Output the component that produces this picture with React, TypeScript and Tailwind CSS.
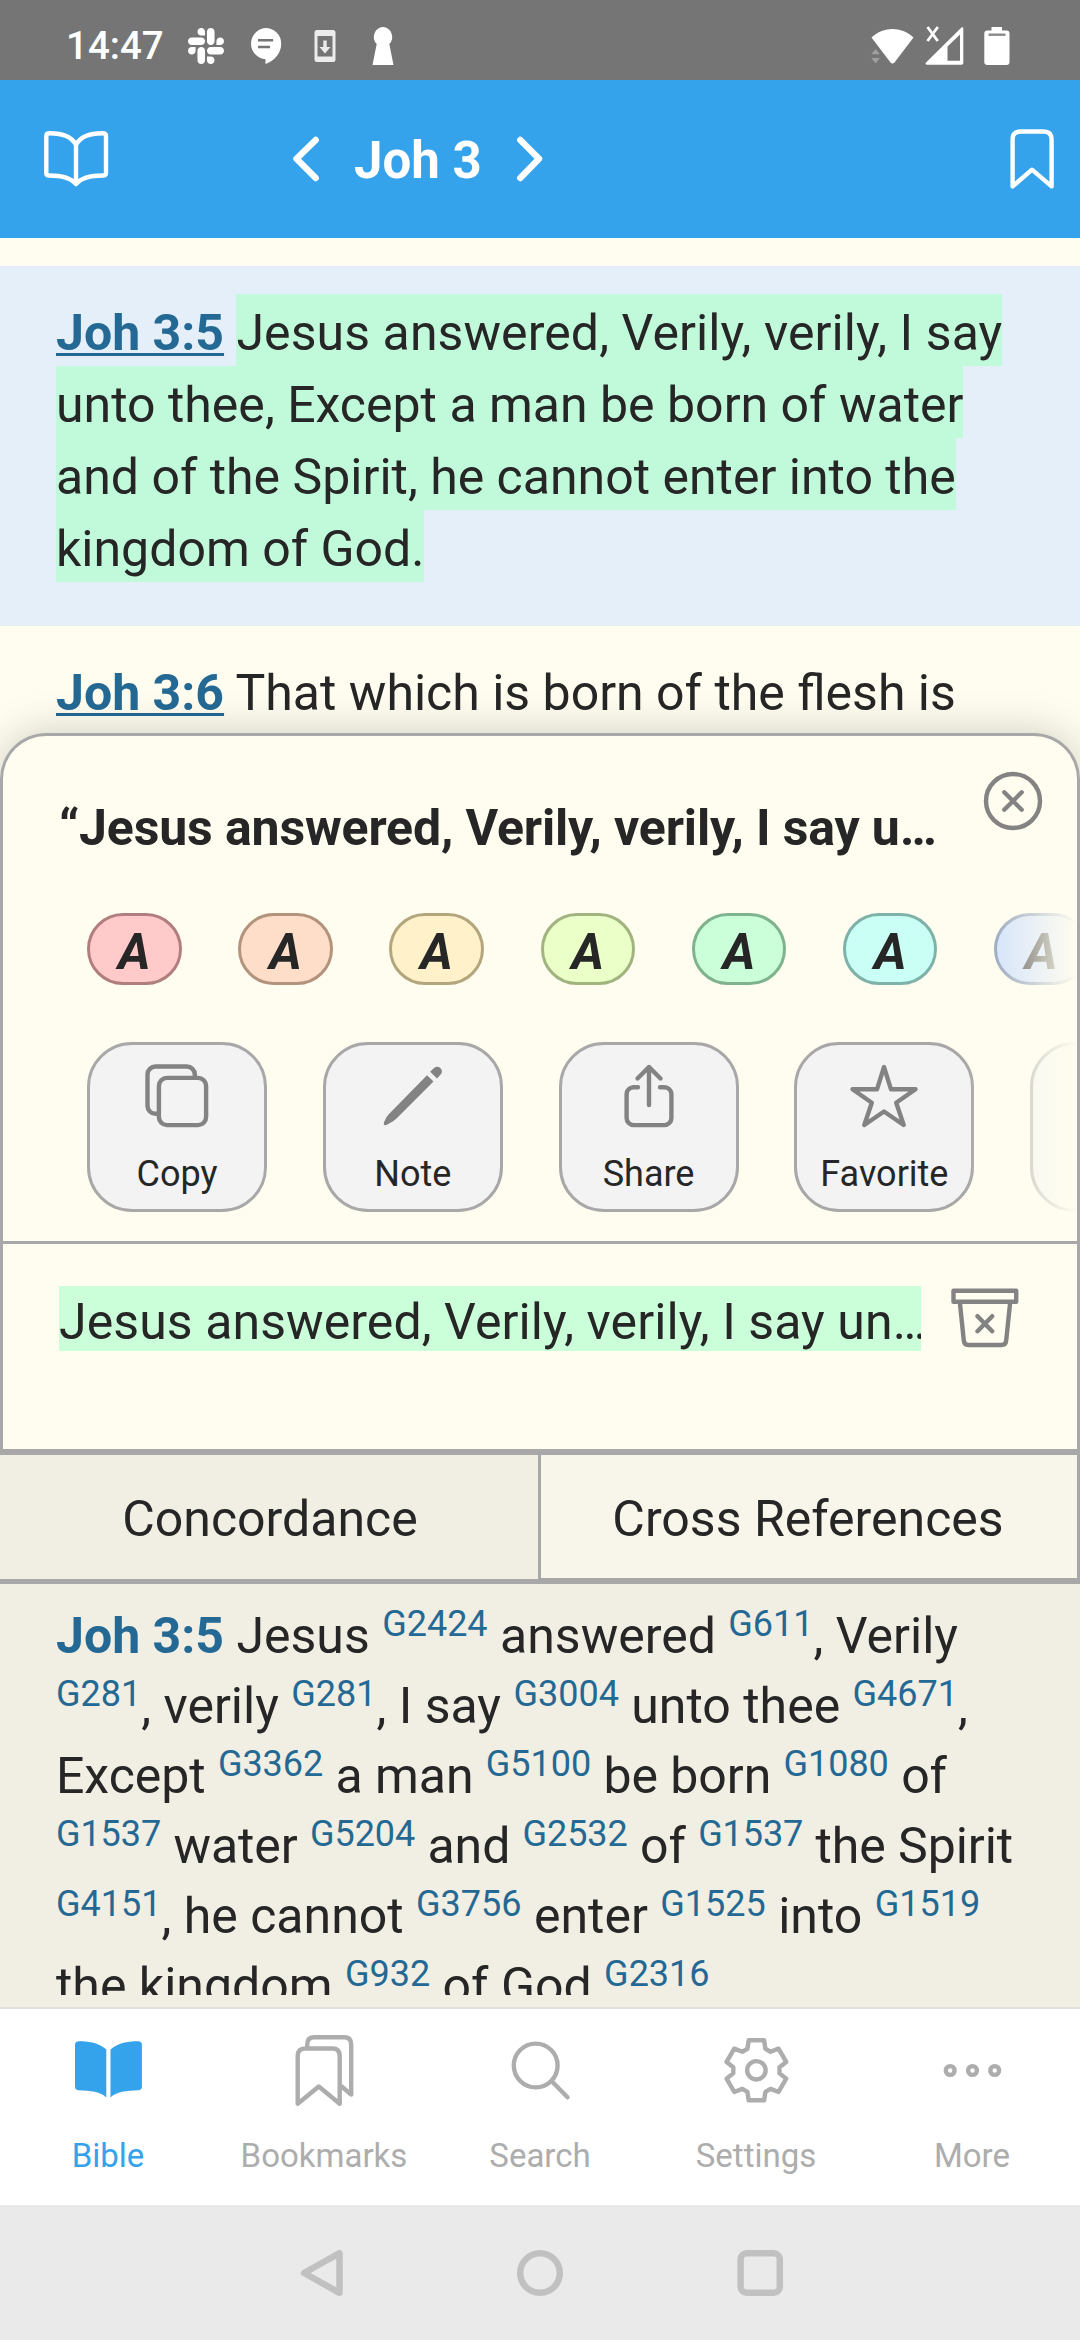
import React from "react";
import { FaSlack } from "react-icons/fa";

const pills = [
  "bg-[#ffcac9] border-[#b07e7e]",
  "bg-[#ffdec9] border-[#b3937c]",
  "bg-[#fff1c9] border-[#b3a67d]",
  "bg-[#ebffc9] border-[#a1b37e]",
  "bg-[#caffd9] border-[#7eb38e]",
  "bg-[#c9fff4] border-[#7eb2a9]",
  "bg-[#c9dcff] border-[#7e92b3]",
];

function Line({ children, className = "", h = 72 }: { children?: React.ReactNode; className?: string; h?: number }) {
  return (
    <svg
      width="72"
      height={h}
      viewBox={`0 0 72 ${h}`}
      fill="none"
      stroke="currentColor"
      strokeWidth="4.4"
      strokeLinecap="round"
      strokeLinejoin="round"
      className={`shrink-0 ${className}`}
    >
      {children}
    </svg>
  );
}

function StatusBar() {
  return (
    <div className="flex h-[80px] shrink-0 items-start bg-[#757575] text-white">
      <span className="ml-[66px] mt-[23px] w-[100px] text-[38.5px] leading-[46px] font-medium">14:47</span>
      <FaSlack className="ml-[22px] mt-[25px] h-[42px] w-[36px]" />
      <svg className="ml-[25px] mt-[27px]" width="34" height="38" viewBox="0 0 34 38">
        <path fill="white" d="M16.5 1a15.7 15.7 0 0 1 15.7 15.7C32.2 26 26 33.500 16.500 37V32.300A15.700 15.700 0 0 1 16.500 1Z" />
        <path stroke="#757575" strokeWidth="2.600" d="M9 13.300H24.200M9 20H21" />
      </svg>
      <svg className="ml-[31px] mt-[29px]" width="22" height="34" viewBox="0 0 22 34">
        <path fill="#ececec" fillRule="evenodd" d="M3 1H19a2.500 2.500 0 0 1 2.500 2.500V30.500A2.500 2.500 0 0 1 19 33H3A2.500 2.500 0 0 1 .5 30.500V3.500A2.500 2.500 0 0 1 3 1ZM3.500 7V27.500H18.500V7Z" />
        <path fill="#ececec" d="M9.300 11.500H12.700V18H16.500L11 24.500L5.500 18H9.300Z" />
      </svg>
      <svg className="ml-[36px] mt-[26px]" width="22" height="40" viewBox="0 0 22 40">
        <path fill="white" d="M11 1a10 10 0 0 1 6.300 17L21.500 39H.5L4.700 18A10 10 0 0 1 11 1Z" />
      </svg>
      <svg className="ml-[477px] mt-[28px]" width="44" height="37" viewBox="0 0 44 37">
        <path fill="white" d="M.5 9.500C13-1.800 30-1.800 42.500 9.500L23.500 34.500Q21.500 36.500 19.500 34.500Z" />
        <path fill="#a0a0a0" stroke="#757575" strokeWidth="1" d="M-.5 26.700L4.600 20.500L9.700 26.700ZM-.5 29.500L4.600 36L9.700 29.500Z" />
      </svg>
      <svg className="ml-[10px] mt-[26px]" width="40" height="40" viewBox="0 0 40 40">
        <path fill="white" fillRule="evenodd" d="M1 38.500Q0 38 1 36.500L36.500 1.500Q38.300 .5 38.300 2.500V37Q38.300 38.700 36.500 38.700H2ZM22.500 20.500V34.800H35V8.500Z" />
        <path stroke="white" strokeWidth="2.800" d="M2.500 1L12.800 15M12.800 1L2.500 15" />
      </svg>
      <svg className="ml-[18px] mt-[26px]" width="28" height="40" viewBox="0 0 28 40">
        <path fill="white" d="M8.500 1H19V4.500H23.500Q26.500 4.500 26.500 7.500V36Q26.500 39 23.500 39H4.500Q1.300 39 1.300 36V7.500Q1.300 4.500 4.500 4.500H8.500Z" />
        <path stroke="#8a8a8a" strokeWidth="2.400" d="M5.500 8.700H22.500" />
      </svg>
    </div>
  );
}

function Header() {
  return (
    <div className="flex h-[158px] shrink-0 bg-[#35a3eb] text-white">
      <Line className="ml-[40px] mt-[43px]">
        <path d="M36 22C32 14 22 10.300 9.500 10.300Q6.300 10.300 6.300 13V50Q6.300 52.500 9 52.500C22 52.500 31 55 36 61C41 55 50 52.500 63 52.500Q66 52.500 66 50V13Q66 10.300 62.500 10.300C50 10.300 40 14 36 22V61" />
      </Line>
      <svg className="ml-[178px] mt-[53px]" width="34" height="52" viewBox="0 0 34 52" fill="none" stroke="white" strokeWidth="6.400" strokeLinecap="round" strokeLinejoin="round">
        <path d="M25.700 7L6.500 25.800L25.700 45" />
      </svg>
      <span className="ml-[30px] mt-[51px] w-[126px] text-[51px] leading-[60px] font-bold whitespace-nowrap">Joh 3</span>
      <svg className="ml-[32px] mt-[53px]" width="34" height="52" viewBox="0 0 34 52" fill="none" stroke="white" strokeWidth="6.400" strokeLinecap="round" strokeLinejoin="round">
        <path d="M8.300 7L27 25.800L8.300 45" />
      </svg>
      <Line className="ml-[450px] mt-[43px]">
        <path d="M16.600 63.400V16.500Q16.600 8.500 24.600 8.500H47.600Q55.600 8.500 55.600 16.500V63.400L36 46.700Z" />
      </Line>
    </div>
  );
}

function Verses() {
  const hl = "bg-[#c1fada] pt-[10px] pb-[4px]";
  return (
    <div className="h-[540px] shrink-0 overflow-hidden bg-[#fffdef] pt-[28px] text-[50px] leading-[72px] whitespace-nowrap text-[#262626]">
      <div className="h-[360px] bg-[#e5effa] pt-[31px] pl-[56px]">
        <b className="text-[#246994] underline decoration-[3px] underline-offset-[3px]">Joh 3:5</b>{" "}
        <span className={`${hl} tracking-[0.08px]`}>Jesus answered, Verily, verily, I say</span>
        <br />
        <span className={hl}>unto thee, Except a man be born of water</span>
        <br />
        <span className={hl}>and of the Spirit, he cannot enter into the</span>
        <br />
        <span className={hl}>kingdom of God.</span>
      </div>
      <div className="pt-[31px] pl-[56px]">
        <b className="text-[#246994] underline decoration-[3px] underline-offset-[3px]">Joh 3:6</b> That which is born of the flesh is
      </div>
    </div>
  );
}

function Action({ label, children }: { label?: string; children?: React.ReactNode }) {
  return (
    <div className="flex h-[170px] w-[180px] shrink-0 flex-col items-center rounded-[45px] border-[3px] border-[#a8a8a8] bg-[#f3f3f3] pt-[15px] text-[#838383]">
      {children}
      <span className="mt-[21px] text-[36px] leading-[42px] text-[#262626]">{label}</span>
    </div>
  );
}

function Sheet() {
  return (
    <div className="relative -mt-[45px] flex h-[716px] shrink-0 flex-col overflow-hidden rounded-t-[46px] border-x-[3px] border-t-[3px] border-[#a8a8a8] bg-[#fffdef] text-[#262626]">
      <div className="flex h-[157px] shrink-0">
        <div className="ml-[56px] mt-[62px] w-[900px] text-[50px] leading-[60px] font-bold tracking-[-0.14px] whitespace-nowrap">“Jesus answered, Verily, verily, I say u…</div>
        <Line className="ml-[18px] mt-[29px] text-[#838383]">
          <circle cx="36" cy="36" r="27" />
          <path d="M27.300 27.300L44.700 44.700M44.700 27.300L27.300 44.700" />
        </Line>
      </div>
      <div className="relative h-[348px] shrink-0 overflow-hidden">
        <div className="flex gap-[56.700px] pt-[20px] pl-[84px]">
          {pills.map((p) => (
            <div key={p} className={`flex h-[72px] w-[94.500px] shrink-0 items-center justify-center rounded-[36px] border-[3px] pt-[5px] text-[50px] font-bold italic ${p}`}>
              <span className="leading-[60px]">A</span>
            </div>
          ))}
        </div>
        <div className="mt-[57px] flex gap-[55.800px] pl-[84px]">
          <Action label="Copy">
            <Line>
              <rect x="17.900" y="17.900" width="47.200" height="47.200" rx="8" />
              <path d="M17.900 53.800H14.500a8 8 0 0 1 -8-8V14.500a8 8 0 0 1 8-8H45.800a8 8 0 0 1 8 8V17.900" />
            </Line>
          </Action>
          <Action label="Note">
            <Line>
              <path stroke="none" fill="currentColor" d="M13 53L50 15.200L56.500 21.600L19.500 58.500Q17 61 9.500 65Q6 65.800 7 62.200Q10 55.500 13 53ZM53.200 11.800L57 8Q60.500 5.400 63.500 8.200Q66.300 11.100 63.700 14.600L60 18.600Z" />
            </Line>
          </Action>
          <Action label="Share">
            <Line>
              <path d="M25 27.200H20.600a7 7 0 0 0 -7 7V58.100a7 7 0 0 0 7 7H51.400a7 7 0 0 0 7-7V34.200a7 7 0 0 0 -7-7H47M36 7V45M24.500 18.500L36 7L47.500 18.500" />
            </Line>
          </Action>
          <Action label="Favorite">
            <Line>
              <path d="M36 7L43 29.300H67.500L48.200 42.800L55.700 65L36 51.500L16.300 65L23.800 42.800L4.500 29.300H29Z" />
            </Line>
          </Action>
          <Action />
        </div>
        <div className="absolute inset-y-0 right-0 w-[110px] bg-gradient-to-r from-[#fffdef00] to-[#fffdef]" />
      </div>
      <div className="flex grow border-t-[3px] border-[#a8a8a8]">
        <div className="ml-[56px] mt-[42px] h-[65px] w-[862px] overflow-hidden bg-[#caffd9] pt-[6px] text-[50px] leading-[60px] tracking-[0.080px] whitespace-nowrap">Jesus answered, Verily, verily, I say un…</div>
        <Line className="ml-[28px] mt-[38px] text-[#838383]">
          <path d="M4.500 8.700H67.200V19.800H4.500ZM10.800 20L14.800 58.500Q15.300 63 19.500 63H52.500Q56.700 63 57.200 58.500L61.200 20M28.500 34.200L43.200 49.200M43.200 34.200L28.500 49.200" />
        </Line>
      </div>
    </div>
  );
}

function G({ n }: { n: string }) {
  return <span className="align-[17px] text-[36px] leading-[0px] text-[#246994]">G{n}</span>;
}

function Concordance() {
  return (
    <div className="h-[423px] shrink-0 bg-[#f1eee3]">
      <div className="h-[411px] overflow-hidden pt-[17px] pl-[56px] text-[50px] leading-[70px] whitespace-nowrap text-[#262626]">
        <b className="text-[#246994]">Joh 3:5</b> Jesus <G n="2424" /> answered <G n="611" />, Verily
        <br />
        <G n="281" />, verily <G n="281" />, I say <G n="3004" /> unto thee <G n="4671" />,
        <br />
        <span className="tracking-[-0.05px]">
          Except <G n="3362" /> a man <G n="5100" /> be born <G n="1080" /> of
        </span>
        <br />
        <span className="tracking-[-0.07px]">
          <G n="1537" /> water <G n="5204" /> and <G n="2532" /> of <G n="1537" /> the Spirit
        </span>
        <br />
        <G n="4151" />, he cannot <G n="3756" /> enter <G n="1525" /> into <G n="1519" />
        <br />
        the kingdom <G n="932" /> of God <G n="2316" />
      </div>
    </div>
  );
}

const tooth: [number, number][] = [[-9, -21.5], [-7.7, -30], [7.7, -30], [9, -21.5]];
const gear = [0, 1, 2, 3, 4, 5]
  .flatMap((k) => {
    const a = (k * Math.PI) / 3;
    return tooth.map(([x, y]) => `${(36.4 + x * Math.cos(a) - y * Math.sin(a)).toFixed(2)},${(36.3 + x * Math.sin(a) + y * Math.cos(a)).toFixed(2)}`);
  })
  .join(" ");

function Tab({ label, className = "text-[#adadad]", children }: { label: string; className?: string; children: React.ReactNode }) {
  return (
    <div className={`flex flex-1 flex-col items-center pt-[25px] ${className}`}>
      {children}
      <span className="mt-[26px] text-[33px] leading-[40px]">{label}</span>
    </div>
  );
}

function BottomNav() {
  return (
    <div className="flex h-[198px] shrink-0 border-t-2 border-[#e0e0dc] bg-white">
      <Tab label="Bible" className="text-[#35a3eb]">
        <Line h={76}>
          <path stroke="none" fill="currentColor" d="M34.300 15.500C28 9.500 18 7.300 7 7.300Q3 7.300 3 11V52.500Q3 56.300 7 56.300C18 56.500 29 58 34.300 63.500ZM38.500 15.500C45 9.500 55 7.300 66 7.300Q69.900 7.300 69.900 11V52.500Q69.900 56.300 66 56.300C55 56.500 44 58 38.500 63.500Z" />
        </Line>
      </Tab>
      <Tab label="Bookmarks">
        <Line h={76}>
          <path d="M9.700 69.700V22Q9.700 14.500 17 14.500H44.500Q51.700 14.500 51.700 22V69.700L30.800 52.500ZM19.200 14V10.500Q19.200 3.300 26.500 3.300H56Q63.200 3.300 63.200 10.500V60.500L53 52" />
        </Line>
      </Tab>
      <Tab label="Search">
        <Line h={76}>
          <circle cx="31.700" cy="31.500" r="21.900" />
          <path d="M48 47.500L63.500 63.300" />
        </Line>
      </Tab>
      <Tab label="Settings">
        <Line h={76}>
          <polygon points={gear} />
          <circle cx="36.400" cy="36.300" r="9.200" />
        </Line>
      </Tab>
      <Tab label="More">
        <Line h={76}>
          <circle cx="14.200" cy="36.500" r="4.400" />
          <circle cx="36.500" cy="36.500" r="4.400" />
          <circle cx="58.700" cy="36.500" r="4.400" />
        </Line>
      </Tab>
    </div>
  );
}

function SystemNav() {
  return (
    <div className="flex grow items-start bg-[#eaeaea] pt-[32px] text-[#c1c1c1]">
      <Line className="ml-[286px] [stroke-width:6.5]">
        <path d="M18 36L53.500 16.200V55.800Z" />
      </Line>
      <Line className="ml-[146px] [stroke-width:6.5]">
        <circle cx="36" cy="36" r="19.800" />
      </Line>
      <Line className="ml-[148px] [stroke-width:6.5]">
        <rect x="16.600" y="16.300" width="39.200" height="39.400" rx="6" />
      </Line>
    </div>
  );
}

export default function App() {
  return (
    <div className="flex h-[2340px] w-[1080px] flex-col overflow-hidden bg-[#fffdef] font-['Roboto',sans-serif]">
      <StatusBar />
      <Header />
      <div className="flex shrink-0 flex-col overflow-hidden">
        <Verses />
        <div className="relative -mt-[45px] shrink-0 rounded-t-[46px] pt-[45px] shadow-[0_-2px_40px_rgba(0,0,0,0.18)]">
          <Sheet />
        </div>
      </div>
      <div className="flex h-[135px] shrink-0 border-t-[6px] border-b-[5px] border-[#a8a8a8] text-[50px] text-[#262626]">
        <div className="flex w-[538px] items-center justify-center bg-[#f1eee3] pt-[4px] pl-[2px]">Concordance</div>
        <div className="flex grow items-center justify-center border-r-[3px] border-b border-l-[3px] border-[#a8a8a8] bg-[#f8f5ea] pt-[5px] pr-[2px]">Cross References</div>
      </div>
      <Concordance />
      <BottomNav />
      <SystemNav />
    </div>
  );
}
